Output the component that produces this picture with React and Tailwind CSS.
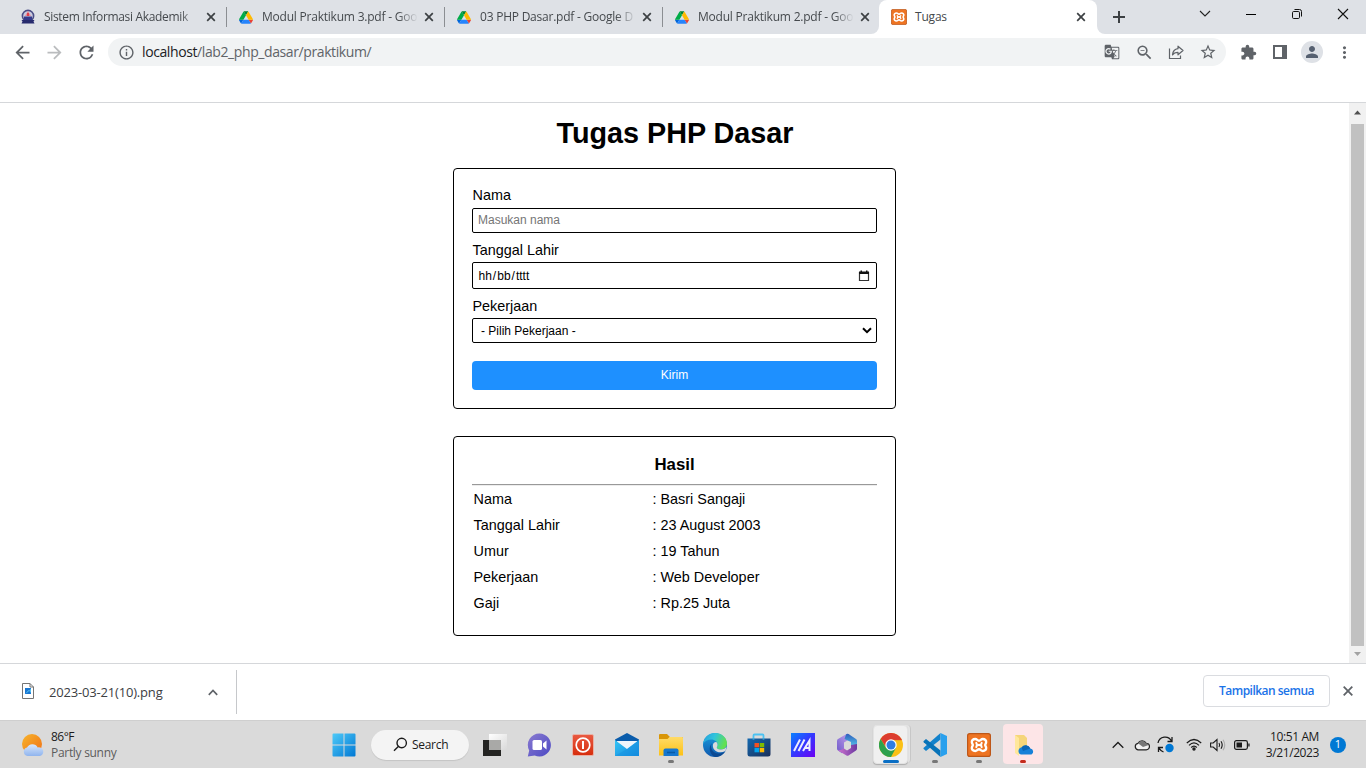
import React from "react";
import {
  MdArrowBack,
  MdArrowForward,
  MdRefresh,
  MdInfoOutline,
  MdGTranslate,
  MdZoomOut,
  MdStarBorder,
  MdExtension,
  MdPerson,
  MdMoreVert,
} from "react-icons/md";

const UI = "font-['Open_Sans','Noto_Sans',sans-serif]";

function DriveIcon() {
  return (
    <svg width="14" height="13" viewBox="0 0 87.3 78" className="shrink-0">
      <path d="m6.6 66.85 3.85 6.65c.8 1.4 1.95 2.5 3.3 3.3l13.75-23.8h-27.5c0 1.55.4 3.1 1.2 4.5z" fill="#0066da" />
      <path d="m43.65 25-13.75-23.8c-1.35.8-2.5 1.9-3.3 3.3l-25.4 44a9.06 9.06 0 0 0 -1.2 4.5h27.5z" fill="#00ac47" />
      <path d="m73.55 76.8c1.35-.8 2.5-1.9 3.3-3.3l1.6-2.75 7.65-13.25c.8-1.4 1.2-2.95 1.2-4.5h-27.5l5.85 11.5z" fill="#ea4335" />
      <path d="m43.65 25 13.75-23.8c-1.35-.8-2.9-1.2-4.5-1.2h-18.5c-1.6 0-3.15.45-4.5 1.2z" fill="#00832d" />
      <path d="m59.8 53h-32.3l-13.75 23.8c1.35.8 2.9 1.2 4.5 1.2h50.8c1.6 0 3.15-.45 4.5-1.2z" fill="#2684fc" />
      <path d="m73.4 26.5-12.7-22c-.8-1.4-1.95-2.5-3.3-3.3l-13.75 23.8 16.15 28h27.45c0-1.55-.4-3.1-1.2-4.5z" fill="#ffba00" />
    </svg>
  );
}

function CampusIcon() {
  return (
    <svg width="14" height="16" viewBox="0 0 14 16" className="shrink-0">
      <circle cx="7" cy="7" r="5.6" fill="#c9cbe0" stroke="#4a4d86" strokeWidth="1.6" />
      <path d="M7 2 10 7H4Z" fill="#e88a96" />
      <path d="M6.2 4h1.6v3H6.2z" fill="#d9303c" />
      <path d="M3 7.5h8v3.5H3z" fill="#353a8c" />
      <path d="M.5 11h13l-1 1.5 1 2H.5l1-2z" fill="#272b6e" />
    </svg>
  );
}

function Xampp({ size }) {
  return (
    <svg width={size} height={size} viewBox="0 0 24 24" className="shrink-0">
      <rect x=".6" y=".6" width="22.8" height="22.8" rx="2.2" fill="#ee7422" stroke="#bd5719" strokeWidth="1.2" />
      <path
        d="M8.300 6C5.800 6 4.500 7.700 4.900 9.500c.2 1 .9 1.700.9 2.500s-.7 1.500-.9 2.500C4.500 16.300 5.800 18 8.300 18c1.800 0 2-1.700 3.700-1.700s1.900 1.700 3.700 1.700c2.500 0 3.800-1.700 3.400-3.500-.2-1-.9-1.700-.9-2.500s.7-1.500.9-2.500C19.500 7.700 18.200 6 15.700 6c-1.800 0-2 1.700-3.700 1.700S10.100 6 8.300 6Z"
        fill="none"
        stroke="#fff"
        strokeWidth="2.400"
      />
      <path d="M9.300 9.800q0 2.200 2.700 2.200t2.700-2.200M9.300 14.200q0-2.200 2.700-2.200t2.700 2.200" fill="none" stroke="#fff" strokeWidth="1.900" strokeLinecap="round" />
    </svg>
  );
}

function CloseX({ className }) {
  return (
    <svg width="10" height="10" viewBox="0 0 10 10" className={`shrink-0 ${className}`}>
      <path d="m1.200 1.200 7.600 7.600M8.800 1.200 1.200 8.800" stroke="#3c4043" strokeWidth="1.700" />
    </svg>
  );
}

function Tab({ icon, title, fit }) {
  return (
    <div className="flex h-[34px] w-[218px] items-center pl-[12px]">
      {icon}
      <div className="ml-[9px] w-[156px] [mask-image:linear-gradient(90deg,#000_136px,transparent_156px)]">
        <span className={`block whitespace-nowrap text-[12px] leading-[16px] text-[#45494d] ${fit}`}>{title}</span>
      </div>
      <CloseX className="ml-[6px]" />
      <div className="ml-[10px] h-[20px] w-px bg-[#8b8e92]" />
    </div>
  );
}

function TabStrip() {
  return (
    <div className="flex h-[34px] bg-[#dee1e6]">
      <div className="flex pl-[9px]">
        <Tab icon={<CampusIcon />} title="Sistem Informasi Akademik" fit="tracking-[-0.33px]" />
        <Tab icon={<DriveIcon />} title="Modul Praktikum 3.pdf - Goo" fit="tracking-[-0.22px]" />
        <Tab icon={<DriveIcon />} title="03 PHP Dasar.pdf - Google D" fit="tracking-[-0.23px]" />
        <div className="w-[216px] overflow-hidden">
          <Tab icon={<DriveIcon />} title="Modul Praktikum 2.pdf - Goo" fit="tracking-[-0.22px]" />
        </div>
      </div>
      <div className="flex w-[232px] -ml-[8px]">
        <div className="w-[8px] shrink-0 bg-white">
          <div className="h-full rounded-br-[8px] bg-[#dee1e6]" />
        </div>
        <div className="flex w-[218px] shrink-0 items-center rounded-t-[8px] bg-white pl-[12px]">
          <Xampp size={16} />
          <span className="ml-[8px] text-[12px] text-[#45494d] tracking-[-0.2px]">Tugas</span>
          <CloseX className="ml-auto mr-[11px]" />
        </div>
        <div className="w-[8px] shrink-0 bg-white">
          <div className="h-full rounded-bl-[8px] bg-[#dee1e6]" />
        </div>
      </div>
      <svg width="12" height="12" viewBox="0 0 12 12" className="ml-[10px] mt-[11px]">
        <path d="M6 0v12M0 6h12" stroke="#3c4043" strokeWidth="2" />
      </svg>
      <div className="ml-auto flex h-[28px] items-center">
        <div className="flex w-[46px] justify-center">
          <svg width="12" height="8" viewBox="0 0 12 8"><path d="m1 1 5 5 5-5" fill="none" stroke="#222" strokeWidth="1.100" /></svg>
        </div>
        <div className="flex w-[46px] justify-center">
          <div className="h-px w-[10px] bg-black" />
        </div>
        <div className="flex w-[46px] justify-center">
          <svg width="12" height="12" viewBox="0 0 12 12" fill="none" stroke="#111">
            <rect x="1.500" y="3.500" width="7" height="7" rx="1.200" />
            <path d="M3.500 1.500h5a2 2 0 0 1 2 2v5" />
          </svg>
        </div>
        <div className="flex w-[46px] justify-center">
          <svg width="12" height="12" viewBox="0 0 12 12"><path d="m1 1 10 10M11 1 1 11" stroke="#111" strokeWidth="1.100" /></svg>
        </div>
      </div>
    </div>
  );
}

function Toolbar() {
  return (
    <div className="flex h-[36px] items-center text-[#5f6368]">
      <div className="flex w-[108px] items-center pl-[6px]">
        <div className="flex w-8 justify-center"><MdArrowBack size={21} /></div>
        <div className="flex w-8 justify-center text-[#babcbe]"><MdArrowForward size={21} /></div>
        <div className="flex w-8 justify-center"><MdRefresh size={21} /></div>
      </div>
      <div className="flex h-[28px] w-[1118px] items-center rounded-full bg-[#f1f3f4] pl-[10px] pr-[2px]">
        <MdInfoOutline size={17} />
        <span className="ml-[7px] text-[14px] leading-[20px] tracking-[-0.4px] text-[#5f6368]">
          <span className="text-[#202124]">localhost</span>/lab2_php_dasar/praktikum/
        </span>
        <div className="ml-auto flex">
          <div className="flex w-8 items-center justify-center"><MdGTranslate size={16} /></div>
          <div className="flex w-8 items-center justify-center"><MdZoomOut size={19} /></div>
          <div className="flex w-8 items-center justify-center">
            <svg width="16" height="16" viewBox="0 0 16 16" fill="none" stroke="#5f6368" strokeWidth="1.200">
              <path d="M1.500 4.500v10h11v-3" />
              <path d="M10 2.200 15 6.500l-5 4.300V8.300c-2.600 0-4.300.7-5.500 2.600.3-3.200 2.300-5.700 5.500-6.200Z" strokeLinejoin="round" />
            </svg>
          </div>
          <div className="flex w-8 items-center justify-center"><MdStarBorder size={18} /></div>
        </div>
      </div>
      <div className="flex items-center pl-[6px]">
        <div className="flex w-8 justify-center"><MdExtension size={17} /></div>
        <div className="flex w-8 justify-center">
          <svg width="14" height="14" viewBox="0 0 14 14"><path d="M0 0h14v14H0zM2 2v10h7V2z" fill="#5f6368" fillRule="evenodd" /></svg>
        </div>
        <div className="flex w-8 justify-center">
          <div className="flex size-[22px] items-center justify-center rounded-full bg-[#dee1e6] text-[#566070]"><MdPerson size={18} /></div>
        </div>
        <div className="flex w-8 justify-center"><MdMoreVert size={19} /></div>
      </div>
    </div>
  );
}

const results = [
  ["Nama", "Basri Sangaji"],
  ["Tanggal Lahir", "23 August 2003"],
  ["Umur", "19 Tahun"],
  ["Pekerjaan", "Web Developer"],
  ["Gaji", "Rp.25 Juta"],
];

function Page() {
  return (
    <div className="flex h-[560px] font-['Liberation_Sans',Arial,sans-serif] text-black">
      <main className="flex w-[1349px] flex-col items-center pt-[14px]">
        <h1 className="pl-px text-[28.8px] font-bold leading-[33px] tracking-[-0.04px]">Tugas PHP Dasar</h1>
        <form className="mt-[18px] h-[241px] w-[443px] rounded-[4px] border border-black px-[18px] pt-[18px] text-[14.4px]">
          <label className="block h-[21px] pl-[0.5px] leading-[17px]">Nama</label>
          <div className="flex h-[25px] items-center rounded-[2px] border border-black px-[5px] pb-[2px] text-[12px] text-[#757575]">Masukan nama</div>
          <label className="mt-[9px] block h-[20px] pl-[0.5px] leading-[17px]">Tanggal Lahir</label>
          <div className="flex h-[27px] items-center rounded-[2px] border border-black pl-[5.5px] pr-[6px] text-[12px]">
            <span className="flex tracking-[0px]">
              <span>hh</span><span className="px-px">/</span><span>bb</span><span className="px-px">/</span><span>tttt</span>
            </span>
            <svg width="12" height="12" viewBox="0 0 12 12" className="ml-auto">
              <path d="M1.500 2.500h9v8h-9z" fill="none" stroke="#333" strokeWidth="1.200" />
              <path d="M1 1.500h10V4H1zM2.500.5h1.500v2H2.500zM8 .5h1.500v2H8z" fill="#111" />
            </svg>
          </div>
          <label className="mt-[9px] block h-[20px] pl-[0.5px] leading-[17px]">Pekerjaan</label>
          <div className="flex h-[25px] items-center rounded-[2px] border border-black pl-[8px] pr-[4px] text-[12px]">
            <span>- Pilih Pekerjaan -</span>
            <svg width="10" height="7" viewBox="0 0 10 7" className="ml-auto"><path d="m1 1.200 4 4 4-4" fill="none" stroke="#000" strokeWidth="2" /></svg>
          </div>
          <button type="button" className="mt-[18px] block h-[29px] w-full rounded-[4px] bg-[#1e90ff] pb-[1px] text-[12px] text-white">Kirim</button>
        </form>
        <section className="mt-[27px] h-[200px] w-[443px] rounded-[4px] border border-black px-[18px] pt-[18px]">
          <h3 className="text-center text-[16.800px] font-bold leading-[19px]">Hasil</h3>
          <div className="mt-[10px] h-[2px] border-t border-t-[#999] bg-[#ededed]" />
          <div className="pt-[1px] text-[14.400px]">
            {results.map(([k, v]) => (
              <div key={k} className="flex h-[26px] items-center pl-[1.500px]">
                <span className="w-[179px]">{k}</span>
                <span>: {v}</span>
              </div>
            ))}
          </div>
        </section>
      </main>
      <div className="flex w-[17px] flex-col items-center bg-[#f1f1f1]">
        <svg width="17" height="21" viewBox="0 0 17 21"><path d="M5 11.500 8.500 7.500 12 11.500Z" fill="#505050" /></svg>
        <div className="h-[522px] w-[13px] bg-[#c1c1c1]" />
        <svg width="17" height="17" viewBox="0 0 17 17"><path d="M5 6 8.500 10 12 6Z" fill="#a3a3a3" /></svg>
      </div>
    </div>
  );
}

function Downloads() {
  return (
    <div className="flex h-[57px] items-center border-t border-[#d5d7da] bg-white">
      <div className="flex h-[44px] w-[237px] items-center border-r border-[#c6c8cb] pl-[22px]">
        <svg width="12" height="16" viewBox="0 0 12 16" className="-mt-[2px]">
          <path d="M.5.5h7.500l3.500 3.500v11.500H.5z" fill="#fff" stroke="#757575" />
          <path d="M8 .5V4h3.500" fill="none" stroke="#757575" />
          <path d="M3 5h6v6H3z" fill="#1976d2" />
          <path d="m3 11 3.500-4L9 10V5.500L6 9z" fill="#55c1f2" />
        </svg>
        <span className="ml-[15px] w-[124px] whitespace-nowrap pt-px text-[13px] tracking-[-0.18px] text-[#3c4043]">2023-03-21(10).png</span>
        <svg width="10" height="7" viewBox="0 0 10 7" className="ml-[35px]"><path d="m.8 5.800 4.200-4.300 4.200 4.300" fill="none" stroke="#5f6368" strokeWidth="1.700" /></svg>
      </div>
      <div className="ml-auto mb-[3px] flex h-[32px] w-[127px] items-center justify-center rounded-[4px] border border-[#dadce0] whitespace-nowrap text-[12px] font-semibold tracking-[-0.52px] text-[#1a73e8]">Tampilkan semua</div>
      <svg width="10" height="10" viewBox="0 0 10 10" className="mb-[3px] ml-[13px] mr-[13px]"><path d="m.7.7 8.600 8.600M9.300.7.7 9.300" stroke="#5f6368" strokeWidth="1.800" /></svg>
    </div>
  );
}

function Cell({ children, dot }) {
  return (
    <div className="relative flex h-[48px] w-[44px] items-center justify-center">
      {children}
      {dot && <div className="absolute bottom-[6px] left-[19px] h-[3px] w-[6px] rounded-full bg-[#777]" />}
    </div>
  );
}

const defs = (
  <svg width="0" height="0" className="absolute">
    <defs>
      <linearGradient id="win" x1="0" y1="0" x2="1" y2="1"><stop stopColor="#4fcaf8" /><stop offset="1" stopColor="#0078d4" /></linearGradient>
      <linearGradient id="tv" x1="0" y1="0" x2="1" y2="1"><stop stopColor="#fff" /><stop offset="1" stopColor="#d9d9d9" /></linearGradient>
      <linearGradient id="chat" x1="0" y1="0" x2="1" y2="1"><stop stopColor="#8a7bd0" /><stop offset="1" stopColor="#4c49c4" /></linearGradient>
      <linearGradient id="red" x1="0" y1="0" x2="0" y2="1"><stop stopColor="#e95a42" /><stop offset="1" stopColor="#d62d0c" /></linearGradient>
      <linearGradient id="mail" x1="0" y1="0" x2="1" y2="1"><stop stopColor="#35c6f5" /><stop offset="1" stopColor="#1386dd" /></linearGradient>
      <linearGradient id="fold" x1="0" y1="0" x2="0" y2="1"><stop stopColor="#ffdb68" /><stop offset="1" stopColor="#fdc115" /></linearGradient>
      <linearGradient id="edgeA" x1="0" y1="0" x2="1" y2=".3"><stop stopColor="#259ddd" /><stop offset=".5" stopColor="#31c4dc" /><stop offset="1" stopColor="#62e052" /></linearGradient>
      <linearGradient id="edgeB" x1="0" y1="0" x2="0" y2="1"><stop stopColor="#1b9fdf" /><stop offset="1" stopColor="#1059ae" /></linearGradient>
      <linearGradient id="store" x1="0" y1="0" x2="1" y2="1"><stop stopColor="#1268b0" /><stop offset="1" stopColor="#1b2f59" /></linearGradient>
      <linearGradient id="asus" x1="0" y1="0" x2="1" y2="1"><stop stopColor="#0a82ff" /><stop offset=".5" stopColor="#3536ff" /><stop offset="1" stopColor="#6e00f2" /></linearGradient>
      <linearGradient id="mA" x1="0" y1="1" x2="1" y2="0"><stop stopColor="#6d58c9" /><stop offset="1" stopColor="#c7a6ee" /></linearGradient>
      <linearGradient id="mB" x1="0" y1="0" x2="0" y2="1"><stop stopColor="#2f5fbc" /><stop offset="1" stopColor="#55c6ec" /></linearGradient>
      <linearGradient id="mC" x1="0" y1="0" x2="1" y2="0"><stop stopColor="#cf73d0" /><stop offset="1" stopColor="#6a38a0" /></linearGradient>
      <linearGradient id="sun" x1="0" y1="0" x2="1" y2="1"><stop stopColor="#f7b52c" /><stop offset="1" stopColor="#f06f16" /></linearGradient>
      <linearGradient id="cl" x1="0" y1="0" x2="0" y2="1"><stop stopColor="#d9e7fb" /><stop offset="1" stopColor="#8fb4ee" /></linearGradient>
    </defs>
  </svg>
);

function Taskbar() {
  return (
    <div className="flex h-[48px] items-center border-t border-[#cfcfcf] bg-[#dadada]">
      <div className="flex w-[322px] items-center pl-[21px]">
        <svg width="24" height="24" viewBox="0 0 24 24">
          <circle cx="11" cy="11" r="10" fill="url(#sun)" />
          <path d="M6.500 23a4.300 4.300 0 0 1-.5-8.400 6 6 0 0 1 10.700-.2 4.400 4.400 0 0 1 2.300 8.600Z" fill="url(#cl)" />
        </svg>
        <div className="ml-[6px] pt-px text-[12px] leading-[16px]">
          <div className="tracking-[-0.5px] text-[#1b1b1b]">86°F</div>
          <div className="tracking-[-0.3px] text-[#5c5c5c]">Partly sunny</div>
        </div>
      </div>
      <Cell>
        <svg width="24" height="24" viewBox="0 0 24 24"><path d="M.5 1.500Q.5.500 1.500.500H11.500V11.500H.5ZM12.500.5h10q1 0 1 1v10h-11ZM.5 12.500h11v11H1.500q-1 0-1-1ZM12.500 12.500h11v10q0 1-1 1h-10Z" fill="url(#win)" /></svg>
      </Cell>
      <div className="ml-[5px] mr-[4px] flex h-[30px] w-[98px] items-center rounded-full bg-[#f4f4f4] pl-[22px] shadow-[0_1px_1px_rgba(0,0,0,0.1)]">
        <svg width="15" height="15" viewBox="0 0 15 15" fill="none" stroke="#1b1b1b" strokeWidth="1.400">
          <circle cx="8.700" cy="6" r="4.700" /><path d="m5.300 9.400-4.300 4.300" />
        </svg>
        <span className="ml-[4px] text-[12px] tracking-[-0.3px] text-[#1b1b1b]">Search</span>
      </div>
      <Cell>
        <svg width="24" height="22" viewBox="0 0 24 22">
          <path d="M0 6h18v16H0z" fill="#242422" />
          <path d="M6 0h18v16H6z" fill="url(#tv)" />
          <path d="M6 6h12v10H6z" fill="#a9a9a7" />
        </svg>
      </Cell>
      <Cell>
        <svg width="24" height="24" viewBox="0 0 24 24">
          <path d="M12.500.5a11.500 11.500 0 1 1-4.800 22L.8 23.500l1.400-6A11.500 11.500 0 0 1 12.500.5Z" fill="url(#chat)" />
          <rect x="5.500" y="7" width="9.500" height="10" rx="1.600" fill="#fff" />
          <path d="m16 10.500 3.500-3v9L16 13.500z" fill="#fff" />
        </svg>
      </Cell>
      <Cell>
        <svg width="24" height="24" viewBox="0 0 24 24">
          <rect x="1.500" y="1.500" width="21" height="21" rx="1.500" fill="url(#red)" stroke="#e8b2a6" />
          <circle cx="12" cy="12" r="6.800" fill="none" stroke="#fff" strokeWidth="1.700" />
          <path d="M12 8v8" stroke="#fff" strokeWidth="2" />
        </svg>
      </Cell>
      <Cell>
        <svg width="24" height="24" viewBox="0 0 24 24">
          <path d="M12 0 24 6.500V10H0V6.500Z" fill="#0a5cab" />
          <path d="M2 8h20v8H2z" fill="#eef5fb" />
          <path d="M0 7 12 16 24 7v16H0z" fill="url(#mail)" />
          <path d="M12 16 24 7v16H0z" fill="#1490df" opacity=".45" />
        </svg>
      </Cell>
      <Cell dot>
        <svg width="24" height="22" viewBox="0 0 24 22">
          <path d="M0 1q0-1 1-1h7l3 3h12q1 0 1 1v4H0z" fill="#d99608" />
          <path d="M0 5h8.500l2-2H23q1 0 1 1v17.500H0z" fill="url(#fold)" />
          <path d="M4.500 22v-5.500q0-2 2-2h11q2 0 2 2V22z" fill="#1577d0" />
          <path d="M8 18.500h8" stroke="#075aa7" strokeWidth="1.500" />
        </svg>
      </Cell>
      <Cell>
        <svg width="24" height="24" viewBox="0 0 24 24">
          <circle cx="12" cy="12" r="12" fill="url(#edgeB)" />
          <path d="M0 11C.8 4.500 5.800 0 12 0c7 0 12 5 12 10.500 0 3.500-2.700 6-6 6-2.500 0-4.500-.8-4.500-2 0-.7 1.200-1.300 1.200-3C14.700 9 11.800 6.500 8.300 6.500 4.500 6.500 1.500 8.500 0 11Z" fill="url(#edgeA)" />
          <path d="M9.200 10c-3 4 .2 10.500 6.500 10.500 3.200 0 5.200-1.200 6.800-2.500C20.300 21.800 16.500 24 12.500 24 7 22.500 4.500 14 9.200 10Z" fill="#0d4a92" />
          <path d="M13.600 9.200c1.200 1.300 1.300 3.300.4 4.500-.8 1.500.6 2.800 4 2.800 2.500 0 4.500-1 5.500-3L22.500 18c-6.500 3.500-13.800-.5-12.500-6.500.4-1.600 2-2.800 3.600-2.300Z" fill="#dbdbdb" />
        </svg>
      </Cell>
      <Cell>
        <svg width="24" height="24" viewBox="0 0 24 24">
          <path d="M6.500 7V2.500q0-1 1-1h8q1 0 1 1V7" fill="none" stroke="#4cc2f1" strokeWidth="1.800" />
          <path d="M.5 5.500h23V21q0 2.500-2.500 2.500H3Q.5 23.500.5 21Z" fill="url(#store)" />
          <path d="M6.500 5.500v1M16.500 5.500v1" stroke="#4cc2f1" strokeWidth="1.800" />
          <path d="M7.500 10H12v4.300H7.500z" fill="#f25022" /><path d="M12.700 10h4.500v4.300h-4.500z" fill="#7fba00" />
          <path d="M7.500 15H12v4.300H7.500z" fill="#00a4ef" /><path d="M12.700 15h4.500v4.300h-4.500z" fill="#ffb900" />
        </svg>
      </Cell>
      <Cell>
        <svg width="24" height="24" viewBox="0 0 24 24">
          <path d="M0 0h24v24H0z" fill="url(#asus)" />
          <path d="m3 18 6-11.500M7.500 18l6-11.500M12 18l6.500-10.500V18M14.500 15h4" fill="none" stroke="#eef" strokeWidth="2" />
        </svg>
      </Cell>
      <Cell>
        <svg width="22" height="24" viewBox="0 0 22 24">
          <path d="M10.500 1Q11.500.5 12.500 1L14 2v4L8 9.500v8L6 20.300 2 17.500Q1 17 1 15.500V8q0-1.500 1-2Z" fill="url(#mA)" />
          <path d="M12.500 1 20 6q1 .5 1 2v6l-6-1.500V9L8.500 6 10 1.500Q11 .5 12.500 1Z" fill="url(#mB)" />
          <path d="M21 11v4.500q0 1.500-1 2l-7.500 5q-1 .5-2 0L2 17.500 5 17l3-1.500 3 2 4-2.500V12Z" fill="url(#mC)" />
        </svg>
      </Cell>
      <div className="relative flex h-[48px] w-[44px] items-center justify-center">
        <div className="absolute left-[4px] top-[4px] h-[38px] w-[38px] rounded-[4px] border-r border-[#c7c7c7] bg-[#e5e5e5]" />
        <div className="absolute left-[4px] top-[4px] h-[39px] w-[35px] rounded-[4px] border border-[#e3e3e3] bg-[#f0f0f0] shadow-[0_1px_1px_rgba(0,0,0,0.2)]" />
        <svg width="24" height="24" viewBox="0 0 24 24" className="relative">
          <circle cx="12" cy="12" r="12" fill="#fbc116" />
          <path d="M1.600 6A12 12 0 0 1 22.400 6L22.400 6.700H12L7.400 14.700Z" fill="#dc3c2f" />
          <path d="M1.600 6A12 12 0 0 0 12 24L17 14.700H7Z" fill="#2ea14d" />
          <path d="M12 6.700h10.700" stroke="#dc3c2f" strokeWidth="1" />
          <circle cx="12" cy="12" r="5.700" fill="#fff" /><circle cx="12" cy="12" r="4.500" fill="#2f7de1" />
        </svg>
        <div className="absolute bottom-[6px] left-[14px] h-[3px] w-[16px] rounded-full bg-[#0b6fc5]" />
      </div>
      <Cell dot>
        <svg width="24" height="24" viewBox="0 0 24 24">
          <path d="M17.500 0v6.500L3 18l-2.300-2q-.6-.6 0-1.300Z" fill="#1382cb" />
          <path d="M17.500 24v-6.500L3 6 .7 8q-.6.600 0 1.300Z" fill="#0873b8" />
          <path d="M17.500 0 24 3v18l-6.500 3Z" fill="#29a0ed" />
        </svg>
      </Cell>
      <Cell dot><Xampp size={24} /></Cell>
      <div className="relative flex h-[48px] w-[44px] items-center justify-center">
        <div className="absolute left-[2px] top-[3px] h-[40px] w-[40px] rounded-[4px] bg-[#fde5e7]" />
        <svg width="24" height="24" viewBox="0 0 24 24" className="relative">
          <path d="M4 2h9l3 3v16H5z" fill="#f5d57a" /><path d="M4 2 8 5v18l-4-3Z" fill="#ffe79c" />
          <path d="M10 21.500a3.600 3.600 0 0 1 .6-7 5 5 0 0 1 8.700 1 3.200 3.200 0 0 1 1.200 6Z" fill="#1681d8" />
          <path d="M10.500 14.500a5 5 0 0 1 8.800 1L12 18Z" fill="#0866b8" />
        </svg>
        <div className="absolute bottom-[6px] left-[19px] h-[3px] w-[6px] rounded-full bg-[#c42b1c]" />
      </div>
      <div className="ml-auto flex items-center pr-[20px]">
        <svg width="12" height="8" viewBox="0 0 12 8"><path d="m.7 6.800 5.300-5.300 5.300 5.300" fill="none" stroke="#1b1b1b" strokeWidth="1.300" /></svg>
        <svg width="16" height="12" viewBox="0 0 16 12" className="ml-[10px]">
          <path d="M4 10.800a3.300 3.300 0 0 1 0-6.500 4.600 4.600 0 0 1 8.200 0 3.200 3.200 0 0 1 0 6.500Z" fill="#f1f1f1" stroke="#222" strokeWidth="1.200" />
          <path d="M4 4.300a4.600 4.600 0 0 1 8.200 0q1.800.3 2.500 1.700L9 8Z" fill="#777" />
        </svg>
        <svg width="17" height="17" viewBox="0 0 17 17" className="ml-[7px]" fill="none" stroke="#1b1b1b" strokeWidth="1.300">
          <path d="M1 7A7.200 7.200 0 0 1 14.500 5M15 1v4.500h-4.500M1.500 16v-4.500H6M2 12q1.500 2.800 4.500 4" />
          <circle cx="12.500" cy="12" r="4.200" fill="#0078d4" stroke="none" />
        </svg>
        <svg width="16" height="13" viewBox="0 0 16 13" className="ml-[12px]" fill="none" stroke="#1b1b1b" strokeWidth="1.200">
          <path d="M.8 5Q8-2 15.200 5M3 7.300q5-5 10 0M5.200 9.500q2.800-2.800 5.600 0" /><circle cx="8" cy="11" r="1.100" fill="#1b1b1b" />
        </svg>
        <svg width="16" height="14" viewBox="0 0 16 14" className="ml-[8px]" fill="none" stroke="#1b1b1b" strokeWidth="1.100">
          <path d="M.6 5v4h2.600L7 12.500v-11L3.200 5ZM9 5q1.300 2 0 4M11 3.300q2.400 3.700 0 7.400" /><path d="M13 1.700q3.500 5.300 0 10.600" stroke="#aaa" />
        </svg>
        <svg width="16" height="10" viewBox="0 0 16 10" className="ml-[8px]">
          <rect x=".6" y=".6" width="12.800" height="8.800" rx="1.800" fill="none" stroke="#1b1b1b" strokeWidth="1.200" />
          <path d="M2.500 2.500H8v5H2.500zM14.300 3.500h1.300v3h-1.300z" fill="#1b1b1b" />
        </svg>
        <div className="ml-[12px] w-[57px] whitespace-nowrap text-right text-[12px] leading-[16px] tracking-[-0.4px] text-[#1b1b1b]">
          <div>10:51 AM</div>
          <div>3/21/2023</div>
        </div>
        <div className="ml-[11px] flex size-[16px] items-center justify-center rounded-full bg-[#0078d4] text-[11px] text-white">1</div>
      </div>
    </div>
  );
}

export default function App() {
  return (
    <div className={`relative h-[768px] w-[1366px] overflow-hidden bg-white ${UI}`}>
      {defs}
      <TabStrip />
      <Toolbar />
      <div className="h-[33px] border-b border-[#d5d7da]" />
      <Page />
      <Downloads />
      <Taskbar />
    </div>
  );
}
